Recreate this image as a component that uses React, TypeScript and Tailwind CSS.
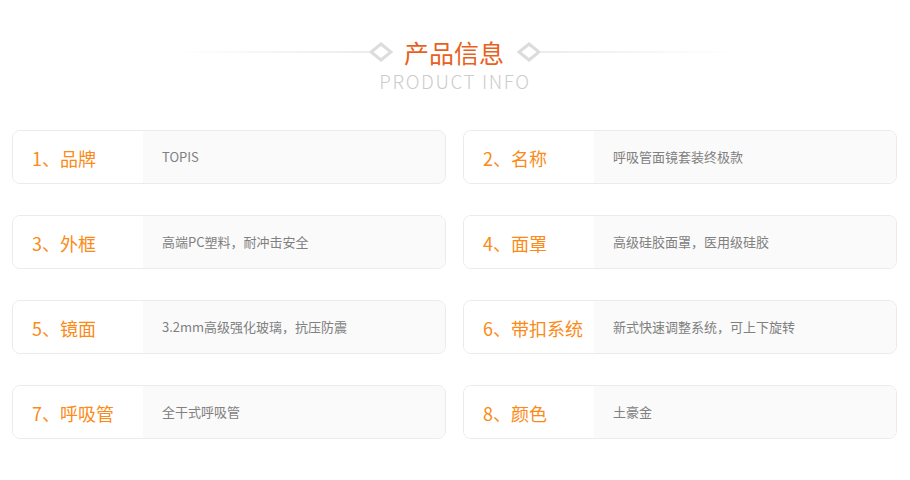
const items = [
  { label: "1、品牌", value: "TOPIS" },
  { label: "2、名称", value: "呼吸管面镜套装终极款" },
  { label: "3、外框", value: "高端PC塑料，耐冲击安全" },
  { label: "4、面罩", value: "高级硅胶面罩，医用级硅胶" },
  { label: "5、镜面", value: "3.2mm高级强化玻璃，抗压防震" },
  { label: "6、带扣系统", value: "新式快速调整系统，可上下旋转" },
  { label: "7、呼吸管", value: "全干式呼吸管" },
  { label: "8、颜色", value: "土豪金" },
];

function Diamond() {
  return (
    <svg width="24" height="20" viewBox="0 0 24 20" className="shrink-0">
      <polygon points="12,2 22,10 12,18 2,10" fill="#fff" stroke="#dcdcdc" strokeWidth="3" />
    </svg>
  );
}

export default function App() {
  return (
    <div
      className="w-[910px] h-[480px] bg-white"
      style={{ fontFamily: '"Microsoft YaHei", "Noto Sans CJK SC", "Noto Sans", sans-serif' }}
    >
      <div className="pt-[38px] flex flex-col items-center">
        <div className="flex items-center">
          <div className="w-[192px] h-[2px] bg-gradient-to-r from-white to-[#ececec]" />
          <Diamond />
          <h1 className="ml-[11px] mr-[13px] text-[25px] leading-[28px] text-[#e8611c]">产品信息</h1>
          <Diamond />
          <div className="w-[192px] h-[2px] bg-gradient-to-l from-white to-[#ececec]" />
        </div>
        <div className="mt-[4px] text-[19px] leading-[22px] tracking-[1.6px] font-light text-[#cccccc]">
          PRODUCT INFO
        </div>
      </div>

      <div className="mt-[38px] pl-[12px] grid grid-cols-[434px_434px] gap-x-[17px] gap-y-[31px]">
        {items.map((it) => (
          <div
            key={it.label}
            className="h-[54px] flex rounded-[8px] border border-[#ebebeb] overflow-hidden"
          >
            <div className="w-[130px] shrink-0 bg-white flex items-center pl-[19px] pt-[2px] text-[18px] text-[#fb8a17]">
              {it.label}
            </div>
            <div className="flex-1 bg-[#fafafa] flex items-center pl-[19px] text-[13px] text-[#808080]">
              {it.value}
            </div>
          </div>
        ))}
      </div>
    </div>
  );
}
